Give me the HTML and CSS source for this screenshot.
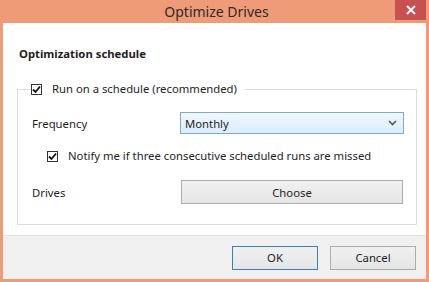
FILE: index.html
```html
<!DOCTYPE html>
<html lang="en">
  <head>
    <meta charset="UTF-8" />
    <meta name="viewport" content="width=device-width, initial-scale=1.0" />
    <title>Optimize Drives</title>
    <link rel="stylesheet" href="styles.css">
  </head>
  <body>
    <div class="window">
      <div class="title-bar">
        <span class="title">Optimize Drives</span>
        <button class="close-button" type="button" aria-label="Close">
          <svg width="10" height="10" viewBox="0 0 10 10">
            <path d="M1 1 L9 9 M9 1 L1 9" stroke="#fff" stroke-width="1.9" />
          </svg>
        </button>
      </div>

      <div class="content">
        <h2>Optimization schedule</h2>

        <fieldset class="schedule">
          <legend>
            <label class="check">
              <span class="box">
                <svg width="9" height="9" viewBox="0 0 9 9">
                  <path d="M1 4.5 L3.5 7 L8 1.5" fill="none" stroke="#111" stroke-width="1.8" />
                </svg>
              </span>
              Run on a schedule (recommended)
            </label>
          </legend>

          <div class="row freq-row">
            <span class="row-label">Frequency</span>
            <div class="select">
              <span>Monthly</span>
              <svg width="9" height="6" viewBox="0 0 9 6">
                <path d="M1 1 L4.5 4.5 L8 1" fill="none" stroke="#555" stroke-width="1.6" />
              </svg>
            </div>
          </div>

          <label class="check notify">
            <span class="box">
              <svg width="9" height="9" viewBox="0 0 9 9">
                <path d="M1 4.5 L3.5 7 L8 1.5" fill="none" stroke="#111" stroke-width="1.8" />
              </svg>
            </span>
            Notify me if three consecutive scheduled runs are missed
          </label>

          <div class="row drives-row">
            <span class="row-label">Drives</span>
            <button class="wide-button" type="button">Choose</button>
          </div>
        </fieldset>
      </div>

      <div class="footer">
        <button class="dialog-button default" type="button">OK</button>
        <button class="dialog-button" type="button">Cancel</button>
      </div>
    </div>
  </body>
</html>
```

FILE: styles.css
```css
body {
  margin: 0;
  font-family: "Noto Sans", "Open Sans", sans-serif;
  font-size: 11.3px;
  color: #1e1e1e;
}

.window {
  width: 429px;
  height: 282px;
  box-sizing: border-box;
  background-color: #f09b78;
  border: 3px solid #f09b78;
  border-top: none;
  display: flex;
  flex-direction: column;
}

.title-bar {
  height: 23px;
  position: relative;
  display: flex;
  justify-content: center;
  align-items: center;
}

.title {
  font-size: 14px;
  color: #2b2b2b;
  padding-left: 4px;
}

.close-button {
  position: absolute;
  top: 0;
  right: 0;
  width: 31px;
  height: 20px;
  border: none;
  padding: 0;
  background-color: #c75050;
  display: flex;
  align-items: center;
  justify-content: center;
}

.content {
  background-color: #fff;
  flex: 1;
  padding: 0 9px 0 14px;
  border-bottom: 1px solid #e3e3e3;
}

h2 {
  font-size: 11.3px;
  font-weight: bold;
  margin: 23px 0 0 2px;
  line-height: 16px;
}

.schedule {
  margin: 19px 0 0 0;
  padding: 0 0 20px 14px;
  border: 1px solid #dcdcdc;
}

legend {
  padding: 0 8px 0 0;
  margin-left: -1px;
}

.check {
  display: flex;
  align-items: center;
  gap: 10px;
  line-height: 16px;
}

.box {
  width: 9px;
  height: 9px;
  border: 1px solid #333;
  background-color: #fff;
  display: flex;
  align-items: center;
  justify-content: center;
}

.row {
  display: flex;
  align-items: center;
}

.freq-row {
  margin-top: 15px;
}

.drives-row {
  margin-top: 16px;
}

.row-label {
  width: 148px;
}

.select {
  width: 224px;
  height: 22px;
  box-sizing: border-box;
  border: 1px solid #7fa8c9;
  background: linear-gradient(#eef7fd, #dbeefa);
  display: flex;
  align-items: center;
  justify-content: space-between;
  padding: 0 6px 0 4px;
}

.notify {
  margin: 14px 0 0 15px;
}

.wide-button {
  width: 222px;
  height: 24px;
  border: 1px solid #acacac;
  background: linear-gradient(#f0f0f0, #e5e5e5);
  font-family: inherit;
  font-size: 11.3px;
  color: #1e1e1e;
  margin-left: 1px;
}

.footer {
  background-color: #f0f0f0;
  height: 43px;
  display: flex;
  justify-content: flex-end;
  align-items: center;
  gap: 12px;
  padding-right: 10px;
}

.dialog-button {
  width: 86px;
  height: 24px;
  border: 1px solid #acacac;
  background: linear-gradient(#f0f0f0, #e5e5e5);
  font-family: inherit;
  font-size: 11.3px;
  color: #1e1e1e;
}

.dialog-button.default {
  border-color: #3c7fb1;
}
```
